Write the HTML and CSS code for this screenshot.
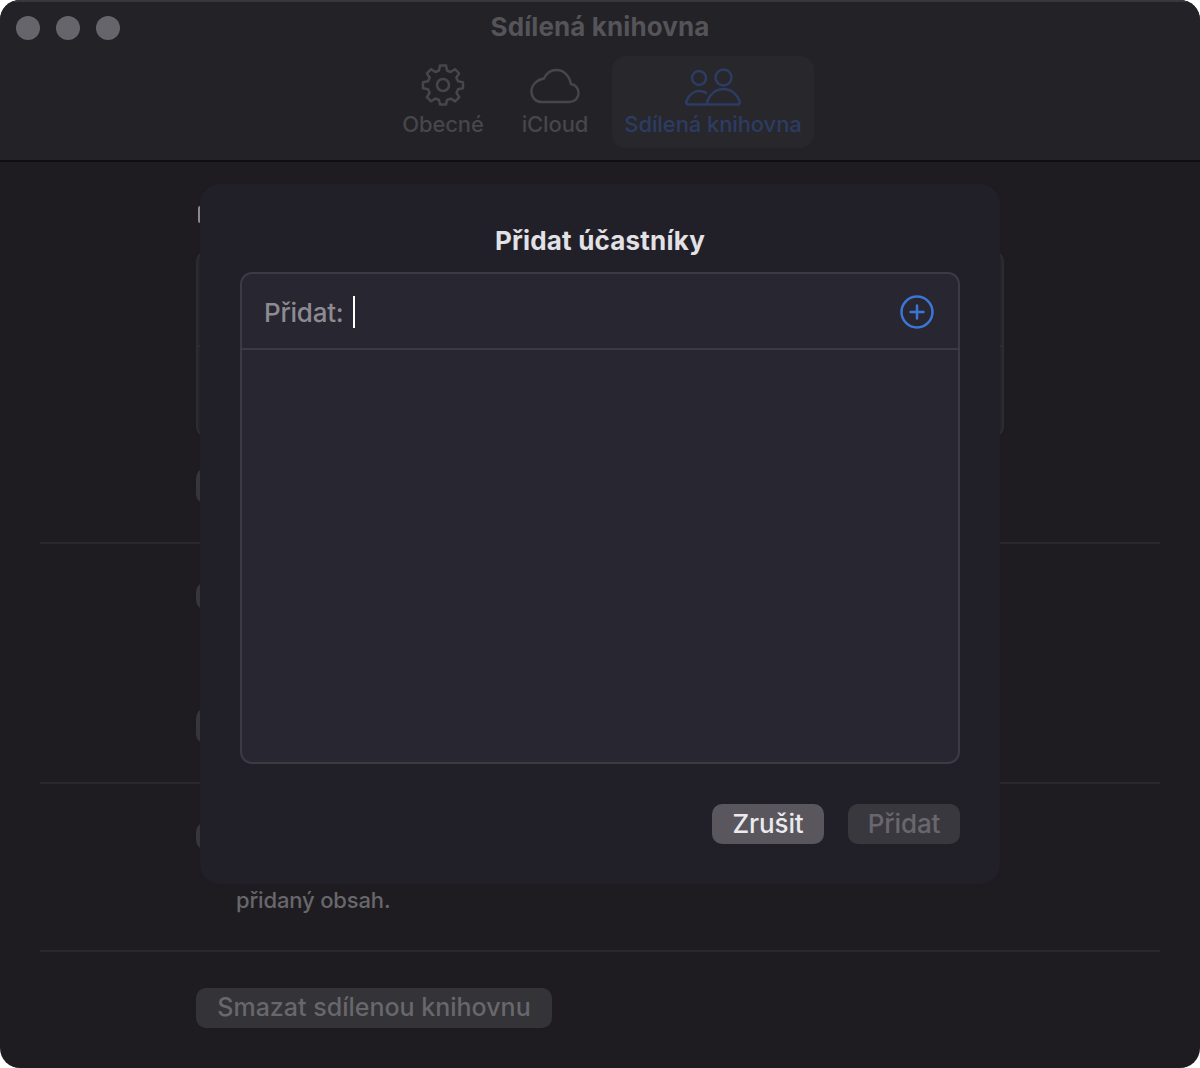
FILE: index.html
```html
<!DOCTYPE html>
<html lang="cs">

<head>
  <meta charset="UTF-8">
  <title>Sdílená knihovna</title>
  <link rel="stylesheet" href="styles.css">
</head>

<body>
  <div class="window">
    <!-- titulek a karty -->
    <header class="toolbar">
      <div class="lights">
        <span></span>
        <span></span>
        <span></span>
      </div>
      <div class="title">Sdílená knihovna</div>
      <nav class="tabs">
        <div class="tab tab-general">
          <svg width="44" height="44" viewBox="0 0 44 44" fill="none" stroke="#47464b" stroke-width="2.500" stroke-linejoin="round">
            <path d="M19 2.500h6l1 5 3.600 1.500 4.300-2.800 4.200 4.200-2.800 4.300L37 18.300l5 1v6l-5 1-1.500 3.600 2.800 4.300-4.200 4.200-4.300-2.800L26 37l-1 4.500h-6L18 37l-3.600-1.500-4.300 2.800-4.200-4.200 2.800-4.300L7 26.300l-5-1v-6l5-1 1.700-3.600-2.800-4.300 4.200-4.200 4.300 2.800L18 7.500z" />
            <circle cx="22" cy="22" r="6" />
          </svg>
          <span>Obecné</span>
        </div>
        <div class="tab tab-cloud">
          <svg width="50" height="36" viewBox="0 0 52 36" preserveAspectRatio="none" fill="none" stroke="#47464b" stroke-width="2.500">
            <path d="M12 34h29c5.500 0 9.500-4 9.500-9s-3.500-8.500-8-9C41 7.500 35 2 27.500 2 21.500 2 17 5.500 14.500 10.500 7.500 11.500 1.500 17 1.500 23.500 1.500 29.500 6 34 12 34z" />
          </svg>
          <span>iCloud</span>
        </div>
        <div class="tab tab-shared">
          <svg width="56" height="38" viewBox="0 0 56 38" fill="none" stroke="#2c3c63" stroke-width="2.500">
            <circle cx="14" cy="10" r="7" />
            <circle cx="38.500" cy="9.500" r="8" />
            <path d="M22 36.500H4c-2.500 0-3.300-1.500-2.500-3.500C4 27 8.500 23 14 23c3 0 6 .8 8 2.500" />
            <path d="M24 36.500h28c2.500 0 3.300-1.500 2.500-3.500-2.500-7-8.500-12-16-12S25 26 22.500 33c-.8 2 0 3.500 1.500 3.500z" />
          </svg>
          <span>Sdílená knihovna</span>
        </div>
      </nav>
    </header>

    <!-- obsah pod dialogem -->
    <main class="content">
      <div class="label-stub"></div>
      <div class="group">
        <div class="group-row"></div>
        <div class="group-row"></div>
      </div>
      <div class="stub stub-first"></div>
      <hr class="divider divider-first">
      <div class="stub stub-second"></div>
      <div class="stub stub-third"></div>
      <hr class="divider divider-second">
      <div class="stub stub-fourth"></div>
      <p class="note">přidaný obsah.</p>
      <hr class="divider divider-third">
      <button class="delete-btn">Smazat sdílenou knihovnu</button>
    </main>

    <!-- dialog -->
    <section class="sheet">
      <h2>Přidat účastníky</h2>
      <div class="box">
        <div class="box-head">
          <span class="box-label">Přidat:</span>
          <span class="caret"></span>
          <svg class="plus" width="34" height="34" viewBox="0 0 34 34" fill="none" stroke="#3b76d6">
            <circle cx="17" cy="17" r="15.500" stroke-width="2.500" />
            <path d="M17 10.500v13M10.500 17h13" stroke-width="2.500" stroke-linecap="round" />
          </svg>
        </div>
        <div class="box-body"></div>
      </div>
      <div class="sheet-buttons">
        <button class="btn btn-cancel">Zrušit</button>
        <button class="btn btn-add">Přidat</button>
      </div>
    </section>
  </div>
</body>

</html>
```

FILE: styles.css
```css
* {
  margin: 0;
  padding: 0;
  box-sizing: border-box;
}

html,
body {
  width: 1200px;
  height: 1068px;
  background: #fff;
  overflow: hidden;
}

body {
  font-family: Inter, "Liberation Sans", sans-serif;
}

.window {
  position: relative;
  width: 1200px;
  height: 1068px;
  background: #1e1c20;
  border-radius: 20px;
  overflow: hidden;
}

/* titulek a karty */
.toolbar {
  position: relative;
  height: 162px;
  background: #232226;
  border-top: 2px solid #38373b;
  border-bottom: 2px solid #0f0e10;
}

.lights {
  position: absolute;
  left: 16px;
  top: 14px;
  display: flex;
  gap: 16px;
}

.lights span {
  width: 24px;
  height: 24px;
  border-radius: 50%;
  background: #67656c;
}

.title {
  padding-top: 9px;
  height: 54px;
  text-align: center;
  font-size: 26px;
  line-height: 32px;
  font-weight: 700;
  letter-spacing: 0.1px;
  color: #555459;
}

.tabs {
  display: flex;
  justify-content: center;
  padding-left: 2px;
}

.tab {
  display: flex;
  flex-direction: column;
  align-items: center;
  height: 92px;
  font-size: 22px;
  line-height: 28px;
  font-weight: 500;
  letter-spacing: -0.1px;
  color: #47464b;
  position: relative;
}

.tab svg {
  display: block;
}

.tab span {
  position: absolute;
  left: 0;
  right: 0;
  bottom: 10px;
  text-align: center;
  white-space: nowrap;
}

.tab-general {
  width: 110px;
  padding-top: 7px;
}

.tab-cloud {
  width: 114px;
  padding-top: 12px;
}

.tab-shared {
  width: 202px;
  padding-top: 12px;
  border-radius: 14px;
  background: #28272b;
  color: #2c3c63;
}

/* obsah pod dialogem */
.content {
  position: relative;
  height: 906px;
  padding: 44px 40px 0;
}

.label-stub {
  width: 4px;
  height: 17px;
  margin-left: 158px;
  background: #8a898e;
  border-radius: 2px 0 0 2px;
}

.group {
  width: 808px;
  height: 188px;
  margin: 27px 0 0 156px;
  background: #252428;
  border: 2px solid #2d2c30;
  border-radius: 12px;
}

.group-row {
  height: 93px;
}

.group-row+.group-row {
  border-top: 2px solid #2d2c30;
}

.stub {
  width: 100px;
  margin-left: 156px;
  background: #37363a;
  border-radius: 10px;
}

.stub-first {
  height: 36px;
  margin-top: 30px;
}

.divider {
  border: 0;
  height: 2px;
  background: #29282c;
}

.divider-first {
  margin-top: 38px;
}

.stub-second {
  height: 28px;
  margin-top: 38px;
}

.stub-third {
  height: 36px;
  margin-top: 98px;
}

.divider-second {
  margin-top: 38px;
}

.stub-fourth {
  height: 28px;
  margin-top: 38px;
}

.note {
  margin: 36px 0 0 196px;
  font-size: 22px;
  line-height: 28px;
  font-weight: 500;
  letter-spacing: -0.15px;
  color: #68676c;
}

.divider-third {
  margin-top: 36px;
}

.delete-btn {
  display: block;
  width: 356px;
  height: 40px;
  margin: 36px 0 0 156px;
  padding-bottom: 2px;
  font-family: inherit;
  font-size: 25px;
  line-height: 38px;
  font-weight: 500;
  color: #68676c;
  background: #343337;
  border: 0;
  border-radius: 10px;
}

/* dialog */
.sheet {
  position: absolute;
  left: 200px;
  top: 184px;
  width: 800px;
  height: 700px;
  padding: 40px;
  background: #211f28;
  border-radius: 20px;
}

.sheet h2 {
  height: 48px;
  text-align: center;
  font-size: 26px;
  line-height: 34px;
  font-weight: 700;
  letter-spacing: 0.2px;
  color: #e2e1e4;
}

.box {
  height: 492px;
  background: #282630;
  border: 2px solid #3c3a42;
  border-radius: 12px;
}

.box-head {
  display: flex;
  align-items: center;
  height: 76px;
  padding: 2px 24px 0 22px;
  border-bottom: 2px solid #3c3a42;
}

.box-label {
  font-size: 26px;
  font-weight: 500;
  letter-spacing: -0.25px;
  color: #8d8b92;
}

.caret {
  width: 2px;
  height: 32px;
  margin-left: 10px;
  background: #fff;
}

.plus {
  margin-left: auto;
}

.sheet-buttons {
  display: flex;
  justify-content: flex-end;
  gap: 24px;
  margin-top: 40px;
}

.btn {
  width: 112px;
  height: 40px;
  font-family: inherit;
  font-size: 26px;
  line-height: 38px;
  font-weight: 500;
  letter-spacing: -0.1px;
  border: 0;
  border-radius: 10px;
}

.btn-cancel {
  background: #59575d;
  color: #ebeaed;
}

.btn-add {
  background: #3a383f;
  color: #69676e;
}
```
